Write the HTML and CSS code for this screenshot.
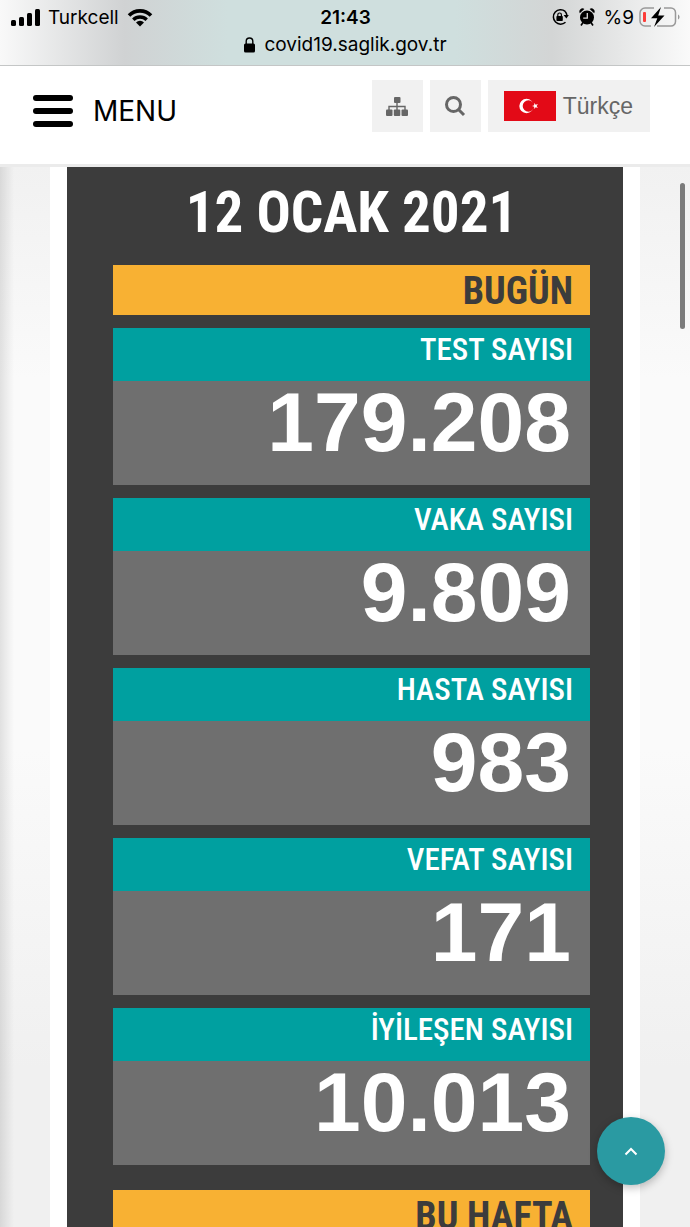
FILE: index.html
```
<!DOCTYPE html>
<html lang="tr">
<head>
  <meta charset="UTF-8">
  <meta name="viewport" content="width=device-width, initial-scale=1">
  <title>covid19.saglik.gov.tr</title>
  <link rel="stylesheet" href="styles.css">
</head>
<body>

<div class="statusbar">
  <div class="status-row">
    <div class="status-left">
      <svg width="29" height="18" viewBox="0 0 29 18">
        <rect x="0" y="12" width="5" height="6" rx="1.5"/>
        <rect x="8" y="9" width="5" height="9" rx="1.5"/>
        <rect x="16" y="5" width="5" height="13" rx="1.5"/>
        <rect x="24" y="1" width="5" height="17" rx="1.5"/>
      </svg>
      <span>Turkcell</span>
      <svg width="26" height="19" viewBox="0 0 26 19">
        <path d="M2 7.5a15.5 15.5 0 0 1 22 0" fill="none" stroke="#000" stroke-width="3.6"/>
        <path d="M6.3 11.8a9.5 9.5 0 0 1 13.4 0" fill="none" stroke="#000" stroke-width="3.4"/>
        <path d="M13 18.5l-4-4a5.6 5.6 0 0 1 8 0z"/>
      </svg>
    </div>
    <div class="clock">21:43</div>
    <div class="status-right">
      <svg width="18" height="18" viewBox="0 0 18 18">
        <path d="M14.2 3.4a7.2 7.2 0 1 0 .3 10.8M14.2 3.4a7.2 7.2 0 0 1 1.7 4" fill="none" stroke="#000" stroke-width="1.5"/>
        <path d="M12.6 7h5.2l-2.4 3.6z"/>
        <rect x="5.4" y="8" width="6.4" height="5" rx="0.8"/>
        <path d="M6.8 8.4V6.8a1.8 1.8 0 0 1 3.6 0v1.6" fill="none" stroke="#000" stroke-width="1.2"/>
      </svg>
      <svg class="alarm" width="16" height="18" viewBox="0 0 16 18">
        <circle cx="8" cy="9.5" r="7"/>
        <path d="M0.8 5.2A3.2 3.2 0 0 1 5.4 1zM15.2 5.2A3.2 3.2 0 0 0 10.6 1z"/>
        <path d="M2 17.5l2-3M14 17.5l-2-3" stroke="#000" stroke-width="1.6"/>
        <path d="M8.3 5v5.2H4.2" fill="none" stroke="#dcdcdc" stroke-width="1.3"/>
      </svg>
      <span>%9</span>
      <svg width="41" height="20" viewBox="0 0 41 20">
        <path d="M15 1H6a5 5 0 0 0-5 5v8a5 5 0 0 0 5 5h6M25 1h7a4.500 4.500 0 0 1 4.500 4.500v9A4.500 4.500 0 0 1 32 19H18" fill="none" stroke="#999" stroke-width="1.5"/>
        <path d="M39 7.500c2 .8 2 4.200 0 5z" fill="#999"/>
        <rect x="4" y="5" width="3" height="10" rx="1" fill="#fc3d39"/>
        <path d="M22 0L12 11.300h6.300L15 20 25.500 8.500h-6.300z"/>
      </svg>
    </div>
  </div>
  <div class="address">
    <svg width="11" height="16" viewBox="0 0 11 16">
      <rect x="0" y="6.500" width="11" height="9" rx="1.500"/>
      <path d="M2.200 7.500V4.300a3.300 3.300 0 0 1 6.600 0v3.200" fill="none" stroke="#000" stroke-width="1.400"/>
    </svg>
    <span>covid19.saglik.gov.tr</span>
  </div>
</div>

<header class="header">
  <button class="menu-btn">
    <span class="bars"><i></i><i></i><i></i></span>
    MENU
  </button>
  <nav class="tools">
    <a class="tool" href="#" aria-label="Site haritası">
      <svg width="22" height="19" viewBox="0 0 22 19" fill="#666">
        <rect x="8" y="0" width="6.500" height="6" rx="1"/>
        <rect x="0" y="12.500" width="6.500" height="6.500" rx="1"/>
        <rect x="7.800" y="12.500" width="6.500" height="6.500" rx="1"/>
        <rect x="15.500" y="12.500" width="6.500" height="6.500" rx="1"/>
        <path d="M11 5v8M3 13v-3.500h16V13" fill="none" stroke="#666" stroke-width="1.400"/>
      </svg>
    </a>
    <a class="tool" href="#" aria-label="Ara">
      <svg width="22" height="22" viewBox="0 0 22 22" fill="none" stroke="#666" stroke-width="3">
        <circle cx="9.500" cy="9.500" r="7"/>
        <path d="M14.500 14.500l5.500 5.500"/>
      </svg>
    </a>
    <a class="tool lang" href="#">
      <svg width="52" height="30" viewBox="0 0 52 30">
        <rect width="52" height="30" fill="#e30a17"/>
        <circle cx="22.500" cy="15" r="7.200" fill="#fff"/>
        <circle cx="24.500" cy="15" r="5.800" fill="#e30a17"/>
        <path d="M28 15l2.200-.8v-2.300l1.500 1.800 2.200-.7-1.300 2 1.300 2-2.200-.7-1.500 1.800v-2.300z" fill="#fff"/>
      </svg>
      Türkçe
    </a>
  </nav>
</header>

<main class="page">
  <section class="panel">
    <h1>12 OCAK 2021</h1>
    <h2>BUGÜN</h2>
    <dl class="stats">
      <div class="stat"><dt>TEST SAYISI</dt><dd>179.208</dd></div>
      <div class="stat"><dt>VAKA SAYISI</dt><dd>9.809</dd></div>
      <div class="stat"><dt>HASTA SAYISI</dt><dd>983</dd></div>
      <div class="stat"><dt>VEFAT SAYISI</dt><dd>171</dd></div>
      <div class="stat"><dt>İYİLEŞEN SAYISI</dt><dd>10.013</dd></div>
    </dl>
    <h2>BU HAFTA</h2>
  </section>
</main>

<div class="scroll-thumb"></div>
<button class="to-top" aria-label="Yukarı">
  <svg width="14" height="9" viewBox="0 0 14 9" fill="none" stroke="#fff" stroke-width="2">
    <path d="M1.500 7.500L7 2l5.500 5.500"/>
  </svg>
</button>

</body>
</html>
```
FILE: styles.css
```
* {
  box-sizing: border-box;
}

body {
  margin: 0;
  height: 100vh;
  overflow: hidden;
  display: flex;
  flex-direction: column;
  background: #fff;
  color: #000;
  font-family: Inter, "Liberation Sans", sans-serif;
}

svg {
  display: block;
  flex: none;
}

.statusbar {
  flex: none;
  height: 66px;
  padding: 4px 10px 0 11px;
  border-bottom: 1px solid #c4c6c6;
  background: linear-gradient(to right, #f9f9f9 0, #d0d2d3 18%, #cfdfde 33%, #cfdfde 66%, #d3d5d5 80%, #fafafa 100%);
  font-size: 19px;
}

.status-row {
  display: grid;
  grid-template-columns: 1fr auto 1fr;
  align-items: center;
  height: 26px;
}

.status-left,
.status-right {
  display: flex;
  align-items: center;
  gap: 8px;
}

.status-right {
  justify-content: flex-end;
  gap: 5px;
}

.alarm {
  margin: 0 4px 0 5px;
}

.clock {
  font-weight: 600;
}

.address {
  display: flex;
  justify-content: center;
  align-items: center;
  gap: 9px;
  height: 29px;
}

.header {
  flex: none;
  display: flex;
  justify-content: space-between;
  align-items: flex-start;
  height: 101px;
  padding: 14px 40px 0 33px;
  background: #fff;
  border-bottom: 3px solid #ebebeb;
}

.menu-btn {
  display: flex;
  align-items: center;
  gap: 20px;
  height: 62px;
  padding: 0;
  border: none;
  background: none;
  color: #000;
  font-family: inherit;
  font-size: 28px;
}

.bars {
  display: grid;
  gap: 7px;
}

.bars i {
  width: 40px;
  height: 6px;
  border-radius: 3px;
  background: #000;
}

.tools {
  display: flex;
  gap: 7px;
}

.tool {
  display: flex;
  justify-content: center;
  align-items: center;
  width: 51px;
  height: 52px;
  background: #f1f1f1;
  color: #666;
  font-family: "Liberation Sans", sans-serif;
  font-size: 23px;
  text-decoration: none;
}

.lang {
  width: auto;
  gap: 7px;
  padding: 0 17px 0 16px;
}

.page {
  flex: 1;
  min-height: 0;
  overflow: hidden;
  padding: 0 50px;
  background:
    linear-gradient(to right, rgba(0, 0, 0, 0.1), rgba(0, 0, 0, 0) 14px),
    linear-gradient(#f1f1f1, #fafafa 20%, #fafafa 55%, #f0f0f0 85%);
}

.panel {
  padding: 0 33px 0 46px;
  border: solid #fff;
  border-width: 0 17px;
  background: #3c3c3c;
  font-family: "Roboto Condensed", "Liberation Sans Narrow", "Liberation Sans", sans-serif;
}

h1 {
  margin: 0;
  padding-top: 4px;
  height: 98px;
  line-height: 84px;
  font-size: 57px;
  text-align: center;
  color: #fff;
}

h2 {
  margin: 0;
  height: 50px;
  padding-right: 17px;
  background: #f8b133;
  color: #3c3c3c;
  font-size: 38px;
  line-height: 52px;
  text-align: right;
}

.stats {
  display: grid;
  gap: 13px;
  margin: 13px 0 25px;
}

.stat {
  color: #fff;
  text-align: right;
}

dt {
  height: 53px;
  padding-right: 17px;
  background: #00a0a0;
  font-size: 31px;
  font-weight: 500;
  line-height: 44px;
}

dd {
  margin: 0;
  height: 104px;
  padding-right: 19px;
  background: #6f6f6f;
  font-family: "Liberation Sans", sans-serif;
  font-size: 84px;
  font-weight: bold;
  line-height: 82px;
}

.scroll-thumb {
  position: fixed;
  top: 183px;
  right: 5px;
  width: 5px;
  height: 146px;
  border-radius: 3px;
  background: #7b7b7b;
}

.to-top {
  position: fixed;
  right: 25px;
  bottom: 42px;
  display: grid;
  place-items: center;
  width: 68px;
  height: 68px;
  border: none;
  border-radius: 50%;
  background: #2a9aa2;
  box-shadow: 0 3px 8px rgba(0, 0, 0, 0.25);
}
```
